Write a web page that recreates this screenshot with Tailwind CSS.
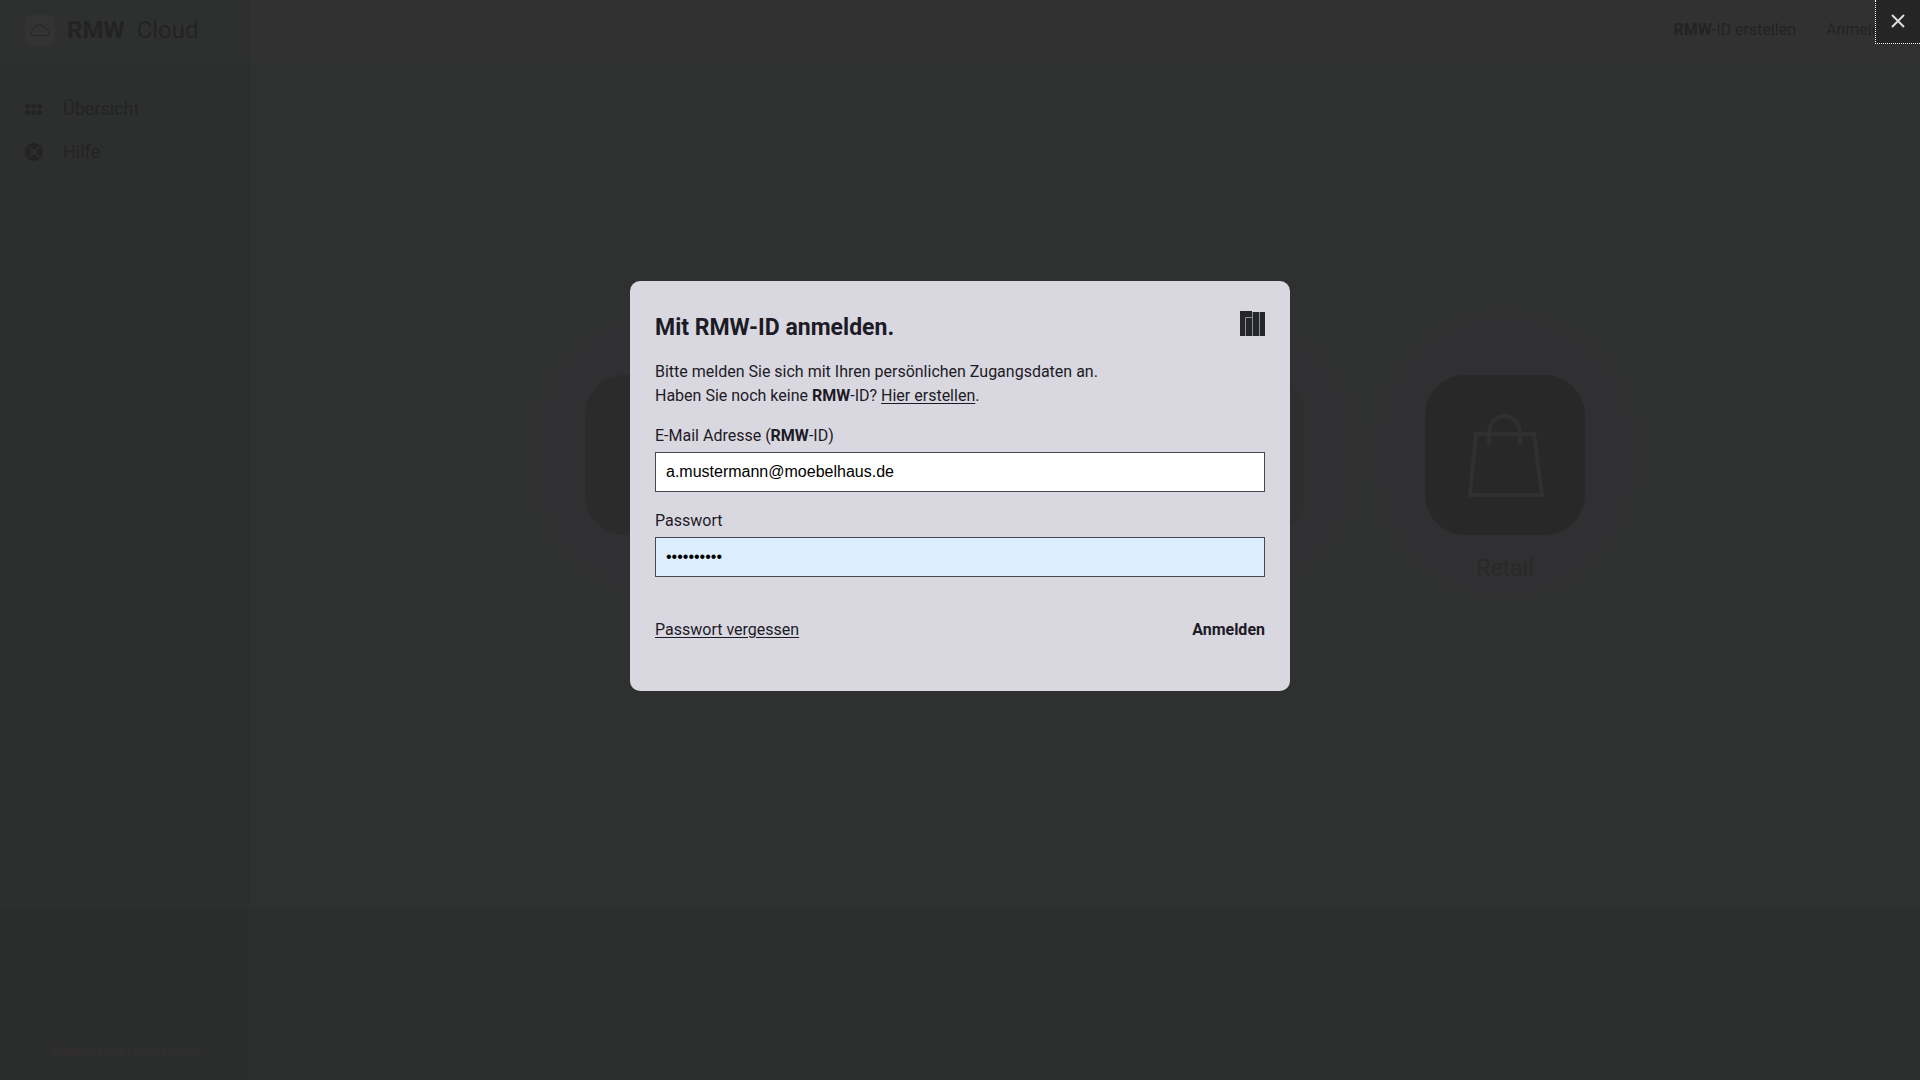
<!DOCTYPE html>
<html lang="de">
<head>
  <meta charset="UTF-8" />
  <meta name="viewport" content="width=device-width, initial-scale=1.0" />
  <title>RMW Cloud</title>
  <script src="https://cdn.jsdelivr.net/npm/@tailwindcss/browser@4"></script>
</head>
<body class="min-h-screen flex bg-[#2f3130] text-[#232323] font-['Roboto',sans-serif]">

  <!-- Sidebar -->
  <aside class="w-[250px] shrink-0 flex flex-col bg-[#2d2f2e]">
    <div class="h-[60px] flex items-center gap-3 px-[25px] bg-[#2e302f]">
      <span class="size-[30px] rounded flex items-center justify-center bg-[#343333]">
        <svg class="w-5 h-4" viewBox="0 0 20 16" fill="none" stroke="#262626" stroke-width="1"><path d="M3.500 13.500a2.800 2.800 0 0 1-.3-5.500A6.500 6.500 0 0 1 15.500 7a3.300 3.300 0 0 1 1 6.500z" /></svg>
      </span>
      <span class="text-2xl leading-8"><b>RMW</b>&ensp;Cloud</span>
    </div>
    <nav class="flex-1 flex flex-col gap-[19px] px-[25px] pt-[37px] text-lg leading-6">
      <a href="#" class="flex items-center gap-[21px]">
        <svg class="size-[17px]" viewBox="0 0 17 17" fill="currentColor"><circle cx="2.500" cy="5" r="2.500" /><circle cx="8.500" cy="5" r="2.500" /><circle cx="14.500" cy="5" r="2.500" /><circle cx="2.500" cy="11.500" r="2.500" /><circle cx="8.500" cy="11.500" r="2.500" /><circle cx="14.500" cy="11.500" r="2.500" /></svg>
        Übersicht
      </a>
      <a href="#" class="flex items-center gap-5">
        <svg class="size-[18px]" viewBox="0 0 18 18"><circle cx="9" cy="9" r="6" fill="none" stroke="currentColor" stroke-width="6" /><path d="M4 4l2.500 2.500M14 4l-2.500 2.500M4 14l2.500-2.500M14 14l-2.500-2.500" stroke="#2d2f2e" stroke-width="2" /><circle cx="9" cy="9" r="3" fill="#2d2f2e" /></svg>
        Hilfe
      </a>
    </nav>
    <div class="h-[170px] flex items-end justify-center pb-4 bg-[#2a2d2c] text-[13px] leading-6 text-[#372d30]">
      <a href="#">Datenschutz</a>&nbsp;|&nbsp;<a href="#">Impressum</a>
    </div>
  </aside>

  <!-- Content -->
  <div class="flex-1 flex flex-col">
    <header class="h-[60px] flex items-center justify-end gap-[30px] px-[22px] bg-[#323131] text-base">
      <a href="#"><b>RMW</b>-ID erstellen</a>
      <a href="#">Anmelden</a>
    </header>
    <main class="flex-1 flex justify-center pt-[245px] border-b border-[#2c2e2d]">
      <a href="#" class="w-[280px] h-[300px] flex flex-col items-center pt-[70px] bg-radial from-[#302f31] from-64% to-[#2f3130] to-72%">
        <span class="size-40 rounded-[40px] bg-[#2b2b2b]"></span>
      </a>
      <a href="#" class="w-[280px] h-[300px] flex flex-col items-center pt-[70px] bg-radial from-[#302f31] from-64% to-[#2f3130] to-72%">
        <span class="size-40 rounded-[40px] bg-[#2b2b2b]"></span>
      </a>
      <a href="#" class="w-[280px] h-[300px] flex flex-col items-center pt-[70px] bg-radial from-[#302f31] from-64% to-[#2f3130] to-72%">
        <span class="size-40 rounded-[40px] bg-[#2e2e2e]"></span>
      </a>
      <a href="#" class="w-[280px] h-[300px] flex flex-col items-center pt-[70px] bg-radial from-[#302f31] from-64% to-[#2f3130] to-72% text-[23px]">
        <span class="size-40 rounded-[40px] bg-[#282828]">
          <svg viewBox="0 0 160 160" fill="none" stroke="#303030" stroke-width="4"><path d="M51 59h58l8 61H45zM64 70V58a15.500 17 0 0 1 31 0v12" /></svg>
        </span>
        <span class="mt-4 leading-9 text-[#292929]">Retail</span>
      </a>
    </main>
    <footer class="h-[170px] bg-[#2c2e2d]"></footer>
  </div>

  <!-- Login dialog -->
  <div class="fixed inset-0 flex items-center justify-center pb-[10vh]">
    <form class="w-full max-w-[660px] rounded-[10px] bg-[#d9d7e0] px-[25px] pt-[30px] pb-[49px] text-base leading-6 text-[#1d1b26]">
      <div class="flex items-start justify-between mb-4">
        <h2 class="text-[23px] leading-[33px] font-bold">Mit RMW-ID anmelden.</h2>
        <svg class="size-[25px]" viewBox="0 0 25 25"><path d="M0 0h12v1h13v24H0z" fill="#25252d" /><path d="M5.500 25V6.500H12M12.500 1v24M19.500 1v24" fill="none" stroke="#8b8b93" /></svg>
      </div>
      <p>Bitte melden Sie sich mit Ihren persönlichen Zugangsdaten an.<br />Haben Sie noch keine <b>RMW</b>-ID? <a href="#" class="underline underline-offset-2">Hier erstellen</a>.</p>

      <label for="email" class="block mt-4 mb-1">E-Mail Adresse (<b>RMW</b>-ID)</label>
      <input id="email" type="email" value="a.mustermann@moebelhaus.de"
             class="block w-full h-10 px-2.5 border border-[#47474f] bg-white text-black font-['Liberation_Sans',sans-serif]">

      <label for="password" class="block mt-[17px] mb-1">Passwort</label>
      <input id="password" type="password" value="mustermann"
             class="block w-full h-10 px-2.5 border border-[#47474f] bg-[#ddefff] text-black font-['Liberation_Sans',sans-serif]">

      <div class="flex items-center justify-between mt-[41px]">
        <a href="#" class="underline underline-offset-2">Passwort vergessen</a>
        <button type="submit" class="font-bold">Anmelden</button>
      </div>
    </form>
  </div>

  <button type="button" aria-label="Schließen" class="fixed top-0 right-0 w-[45px] h-11 pb-0.5 flex items-center justify-center border-l border-b border-dotted border-white bg-[#252525]">
    <svg class="size-3.5" viewBox="0 0 14 14" stroke="#dcdcdc" stroke-width="2"><path d="M1 1l12 12M13 1L1 13" /></svg>
  </button>
</body>
</html>
